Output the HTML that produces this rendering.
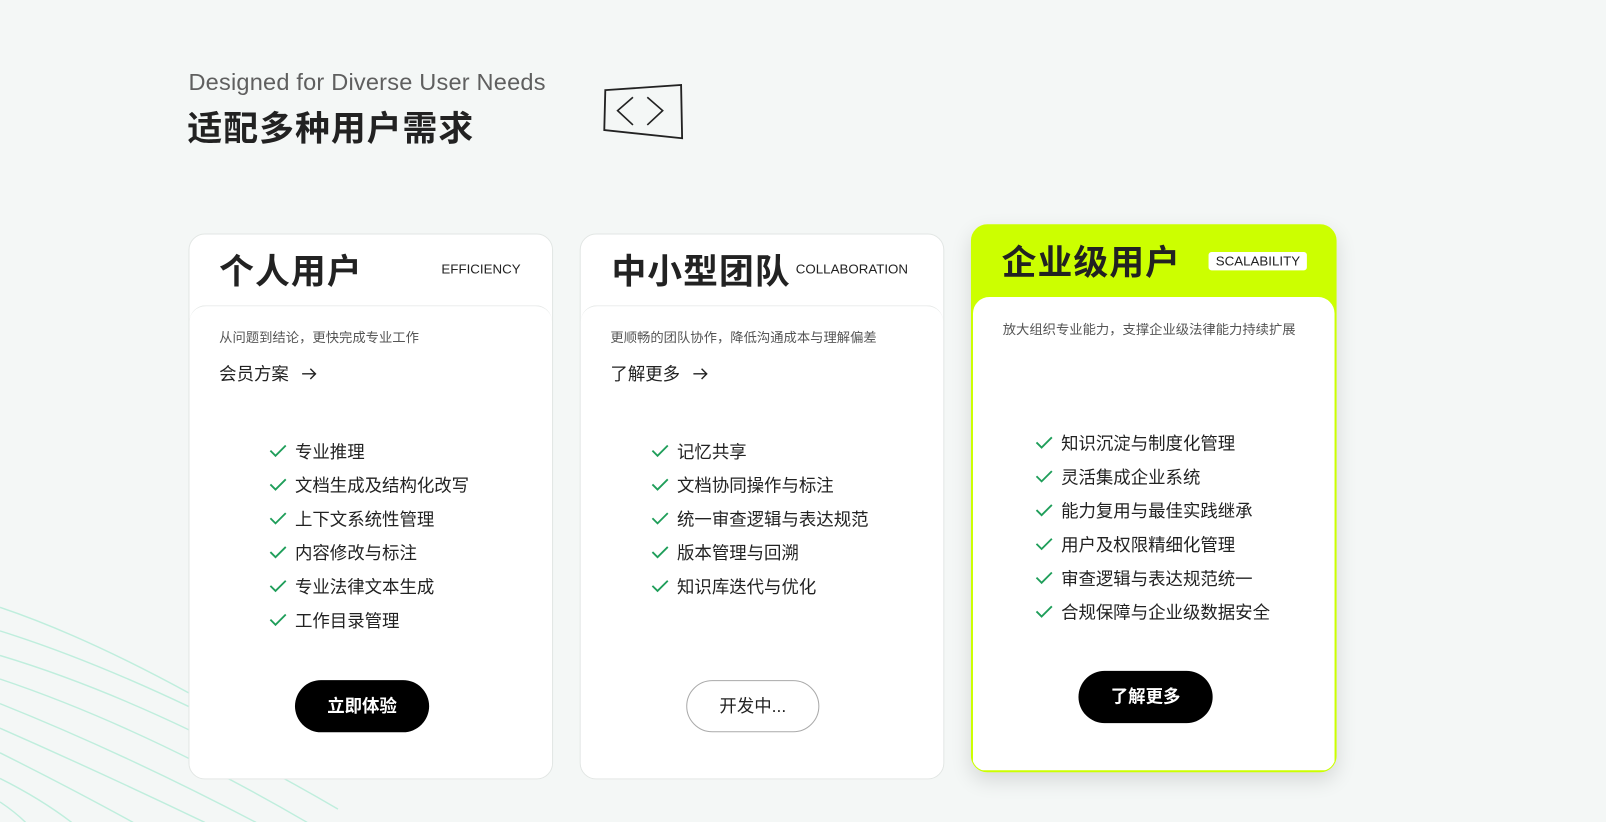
<!DOCTYPE html>
<html><head><meta charset="utf-8">
<style>
*{margin:0;padding:0;box-sizing:border-box}
body{width:1606px;height:803px;overflow:hidden;background:#f4f7f6;font-family:"Liberation Sans","Noto Sans CJK SC",sans-serif;color:#222;position:relative}
#wrap{position:absolute;left:0;top:0;width:1568px;height:784px;transform:scale(1.0242);transform-origin:0 0}
.abs{position:absolute}
.en{left:184px;top:67px;font-size:23px;color:#5f5f5f;letter-spacing:0.2px}
.zh{left:183px;top:98px;font-size:34px;font-weight:bold;color:#222;letter-spacing:1px}
.card{position:absolute;background:#fff;border:1px solid #e2e6e4;border-radius:16px;overflow:hidden}
.title{position:absolute;font-size:34px;font-weight:bold;color:#222;letter-spacing:1px}
.tag{position:absolute;font-size:13px;color:#222}
.body{position:absolute;left:0;right:0;bottom:0;background:#fff;border-top:1px solid #e6e9e8;border-radius:16px 16px 0 0}
.sub{position:absolute;font-size:13px;color:#555}
.link{position:absolute;font-size:17px;color:#222}
.link svg{vertical-align:middle;margin-left:12px;margin-top:-3px}
ul{position:absolute;list-style:none}
li{height:33px;font-size:17px;color:#222;position:relative;padding-left:25px;line-height:22px}
li svg{position:absolute;left:0;top:2px}
.btn{position:absolute;height:51px;border-radius:26px;font-size:17px;font-weight:bold;text-align:center;line-height:51px}
</style></head><body><div id="wrap">
<svg class="abs" style="left:0;top:560px" width="600" height="243" viewBox="0 0 600 243">
<g fill="none" stroke="#bfeedd" stroke-width="1.4">
<path d="M0 33 Q110 70 260 160"/>
<path d="M0 56 Q140 100 320 200"/>
<path d="M0 80 Q150 125 330 230"/>
<path d="M0 103 Q140 150 300 243"/>
<path d="M0 127 Q120 175 250 243"/>
<path d="M0 151 Q100 195 200 243"/>
<path d="M0 175 Q70 210 130 243"/>
<path d="M0 200 Q40 220 70 243"/>
<path d="M0 223 Q15 233 25 243"/>
</g></svg>
<div class="abs en">Designed for Diverse User Needs</div>
<div class="abs zh">适配多种用户需求</div>
<svg class="abs" style="left:586px;top:80px" width="84" height="58" viewBox="0 0 84 58">
<path d="M5 8 L79 3 L80 55 L4 47 Z" fill="none" stroke="#222" stroke-width="1.8"/>
<path d="M32 15 L17 28 L32 42 M46 15 L61 28 L46 42" fill="none" stroke="#222" stroke-width="1.6"/>
</svg>

<div class="card" style="left:184px;top:228px;width:356px;height:533px">
 <div class="title" style="left:29px;top:9px">个人用户</div>
 <div class="tag" style="left:246px;top:26px">EFFICIENCY</div>
 <div class="body" style="top:69px">
  <div class="sub" style="left:29px;top:20px">从问题到结论，更快完成专业工作</div>
  <div class="link" style="left:29px;top:52px">会员方案<svg width="16" height="12"><path d="M1 6 H14 M9 1 L14 6 L9 11" fill="none" stroke="#222" stroke-width="1.4"/></svg></div>
  <ul style="left:78px;top:132px">
   <li><svg width="17" height="14"><path d="M1 7 L6 12 L16 2" fill="none" stroke="#1f9e5a" stroke-width="1.8"/></svg>专业推理</li>
   <li><svg width="17" height="14"><path d="M1 7 L6 12 L16 2" fill="none" stroke="#1f9e5a" stroke-width="1.8"/></svg>文档生成及结构化改写</li>
   <li><svg width="17" height="14"><path d="M1 7 L6 12 L16 2" fill="none" stroke="#1f9e5a" stroke-width="1.8"/></svg>上下文系统性管理</li>
   <li><svg width="17" height="14"><path d="M1 7 L6 12 L16 2" fill="none" stroke="#1f9e5a" stroke-width="1.8"/></svg>内容修改与标注</li>
   <li><svg width="17" height="14"><path d="M1 7 L6 12 L16 2" fill="none" stroke="#1f9e5a" stroke-width="1.8"/></svg>专业法律文本生成</li>
   <li><svg width="17" height="14"><path d="M1 7 L6 12 L16 2" fill="none" stroke="#1f9e5a" stroke-width="1.8"/></svg>工作目录管理</li>
  </ul>
  <div class="btn" style="left:103px;top:365px;width:131px;background:#000;color:#fff">立即体验</div>
 </div>
</div>

<div class="card" style="left:566px;top:228px;width:356px;height:533px">
 <div class="title" style="left:30px;top:9px">中小型团队</div>
 <div class="tag" style="left:210px;top:26px">COLLABORATION</div>
 <div class="body" style="top:69px">
  <div class="sub" style="left:29px;top:20px">更顺畅的团队协作，降低沟通成本与理解偏差</div>
  <div class="link" style="left:29px;top:52px">了解更多<svg width="16" height="12"><path d="M1 6 H14 M9 1 L14 6 L9 11" fill="none" stroke="#222" stroke-width="1.4"/></svg></div>
  <ul style="left:69px;top:132px">
   <li><svg width="17" height="14"><path d="M1 7 L6 12 L16 2" fill="none" stroke="#1f9e5a" stroke-width="1.8"/></svg>记忆共享</li>
   <li><svg width="17" height="14"><path d="M1 7 L6 12 L16 2" fill="none" stroke="#1f9e5a" stroke-width="1.8"/></svg>文档协同操作与标注</li>
   <li><svg width="17" height="14"><path d="M1 7 L6 12 L16 2" fill="none" stroke="#1f9e5a" stroke-width="1.8"/></svg>统一审查逻辑与表达规范</li>
   <li><svg width="17" height="14"><path d="M1 7 L6 12 L16 2" fill="none" stroke="#1f9e5a" stroke-width="1.8"/></svg>版本管理与回溯</li>
   <li><svg width="17" height="14"><path d="M1 7 L6 12 L16 2" fill="none" stroke="#1f9e5a" stroke-width="1.8"/></svg>知识库迭代与优化</li>
  </ul>
  <div class="btn" style="left:103px;top:365px;width:130px;border:1px solid #aaa;color:#222;font-weight:normal;line-height:49px">开发中...</div>
 </div>
</div>

<div class="card" style="left:948px;top:219px;width:357px;height:535px;background:#ccff00;border-color:#ccff00;box-shadow:0 8px 20px rgba(0,0,0,0.12)">
 <div class="title" style="left:29px;top:9px">企业级用户</div>
 <div class="tag" style="left:231px;top:26px;background:#fff;border-radius:3px;padding:0 7px;line-height:18px;font-size:13px">SCALABILITY</div>
 <div class="body" style="top:70px;border-top:none;left:1px;right:1px;bottom:1px">
  <div class="sub" style="left:29px;top:21px">放大组织专业能力，支撑企业级法律能力持续扩展</div>
  <ul style="left:61px;top:133px">
   <li><svg width="17" height="14"><path d="M1 7 L6 12 L16 2" fill="none" stroke="#1f9e5a" stroke-width="1.8"/></svg>知识沉淀与制度化管理</li>
   <li><svg width="17" height="14"><path d="M1 7 L6 12 L16 2" fill="none" stroke="#1f9e5a" stroke-width="1.8"/></svg>灵活集成企业系统</li>
   <li><svg width="17" height="14"><path d="M1 7 L6 12 L16 2" fill="none" stroke="#1f9e5a" stroke-width="1.8"/></svg>能力复用与最佳实践继承</li>
   <li><svg width="17" height="14"><path d="M1 7 L6 12 L16 2" fill="none" stroke="#1f9e5a" stroke-width="1.8"/></svg>用户及权限精细化管理</li>
   <li><svg width="17" height="14"><path d="M1 7 L6 12 L16 2" fill="none" stroke="#1f9e5a" stroke-width="1.8"/></svg>审查逻辑与表达规范统一</li>
   <li><svg width="17" height="14"><path d="M1 7 L6 12 L16 2" fill="none" stroke="#1f9e5a" stroke-width="1.8"/></svg>合规保障与企业级数据安全</li>
  </ul>
  <div class="btn" style="left:103px;top:365px;width:131px;background:#000;color:#fff">了解更多</div>
 </div>
</div>
</div></body></html>
